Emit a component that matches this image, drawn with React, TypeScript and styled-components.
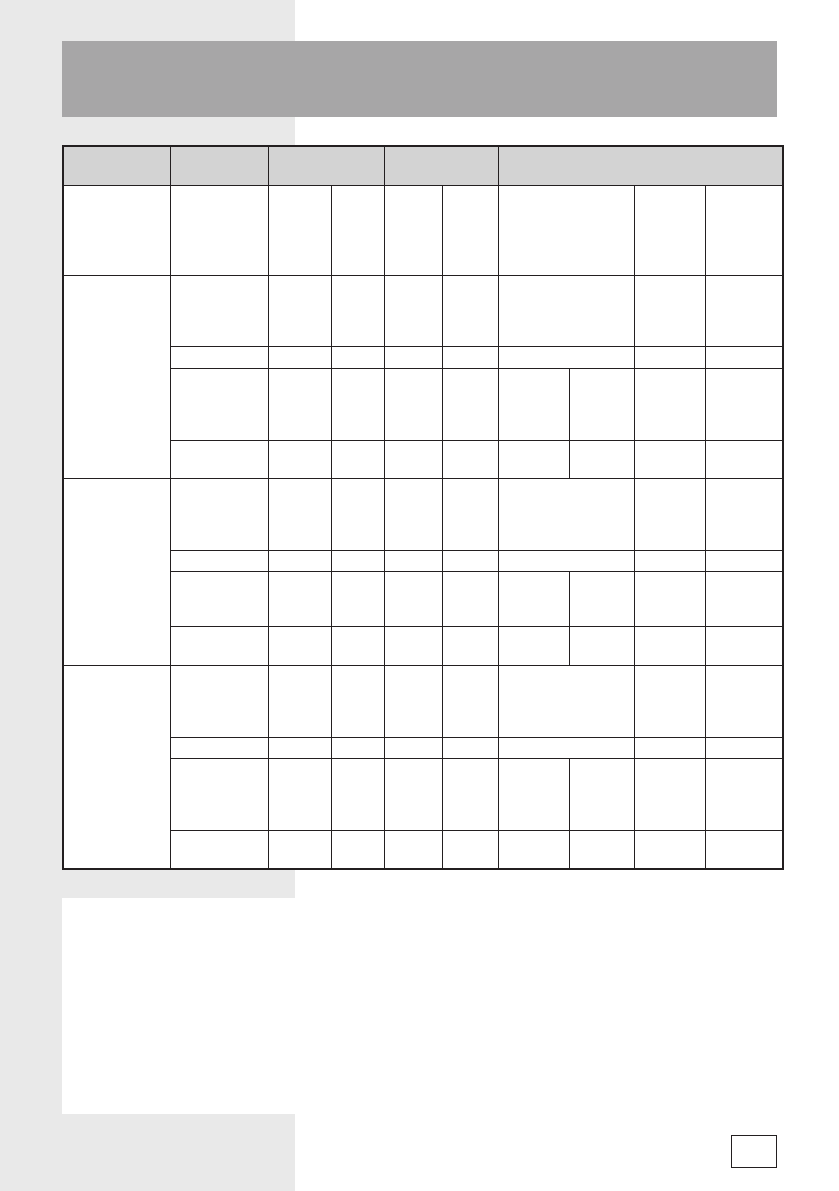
import styled, { createGlobalStyle } from "styled-components";

const GlobalStyle = createGlobalStyle`
  html, body {
    margin: 0;
    padding: 0;
    background: #ffffff;
    font-family: "Liberation Sans", Arial, sans-serif;
  }
`;

const colWidths = [107, 98, 63, 53, 58, 56, 71, 65, 71, 78];

// each group: one label cell on the left, four sub rows
const groups = [
  { rows: [71, 22, 72, 38] },
  { rows: [72, 21, 55, 39] },
  { rows: [72, 21, 72, 38] },
];

const App = (): JSX.Element => {
  return (
    <Page>
      <GlobalStyle />
      <TitleBar />
      <Grid>
        <colgroup>
          {colWidths.map((w, i) => (
            <col key={i} style={{ width: w }} />
          ))}
        </colgroup>
        <thead>
          <tr>
            <HeadCell />
            <HeadCell />
            <HeadCell colSpan={2} />
            <HeadCell colSpan={2} />
            <HeadCell colSpan={4} />
          </tr>
        </thead>
        <tbody>
          <Row $h={90}>
            <Cell />
            <Cell />
            <Cell />
            <Cell />
            <Cell />
            <Cell />
            <Cell colSpan={2} />
            <Cell />
            <Cell />
          </Row>
          {groups.map((g, gi) =>
            g.rows.map((h, ri) => {
              const split = ri >= 2;
              return (
                <Row key={`${gi}-${ri}`} $h={h}>
                  {ri === 0 && <Cell rowSpan={4} />}
                  <Cell />
                  <Cell />
                  <Cell />
                  <Cell />
                  <Cell />
                  {split ? (
                    <>
                      <Cell />
                      <Cell />
                    </>
                  ) : (
                    <Cell colSpan={2} />
                  )}
                  <Cell />
                  <Cell />
                </Row>
              );
            })
          )}
        </tbody>
      </Grid>
      <NoteBox />
      <PageNumber />
    </Page>
  );
};

const Page = styled.div`
  width: 839px;
  height: 1191px;
  box-sizing: border-box;
  padding: 41px 62px 0 62px;
  display: flex;
  flex-direction: column;
  align-items: flex-start;
  background: linear-gradient(to right, #e9e9e9 295px, #ffffff 295px);
  overflow: hidden;
`;

const TitleBar = styled.div`
  width: 715px;
  height: 76px;
  background-color: #a7a6a7;
  margin-bottom: 28px;
`;

const Grid = styled.table`
  width: 720px;
  table-layout: fixed;
  border-collapse: collapse;
  border: 2px solid #231f20;
  background-color: #ffffff;
`;

const HeadCell = styled.th`
  height: 38px;
  padding: 0;
  background-color: #d3d3d3;
  border: 1.5px solid #231f20;
`;

const Row = styled.tr<{ $h: number }>`
  height: ${(p) => p.$h}px;
`;

const Cell = styled.td`
  padding: 0;
  border: 1.5px solid #231f20;
`;

const NoteBox = styled.div`
  width: 233px;
  height: 216px;
  margin-top: 28px;
  background-color: #ffffff;
`;

const PageNumber = styled.div`
  align-self: flex-end;
  width: 44px;
  height: 31px;
  margin-top: 21px;
  border: 1.5px solid #231f20;
`;

export default App;
